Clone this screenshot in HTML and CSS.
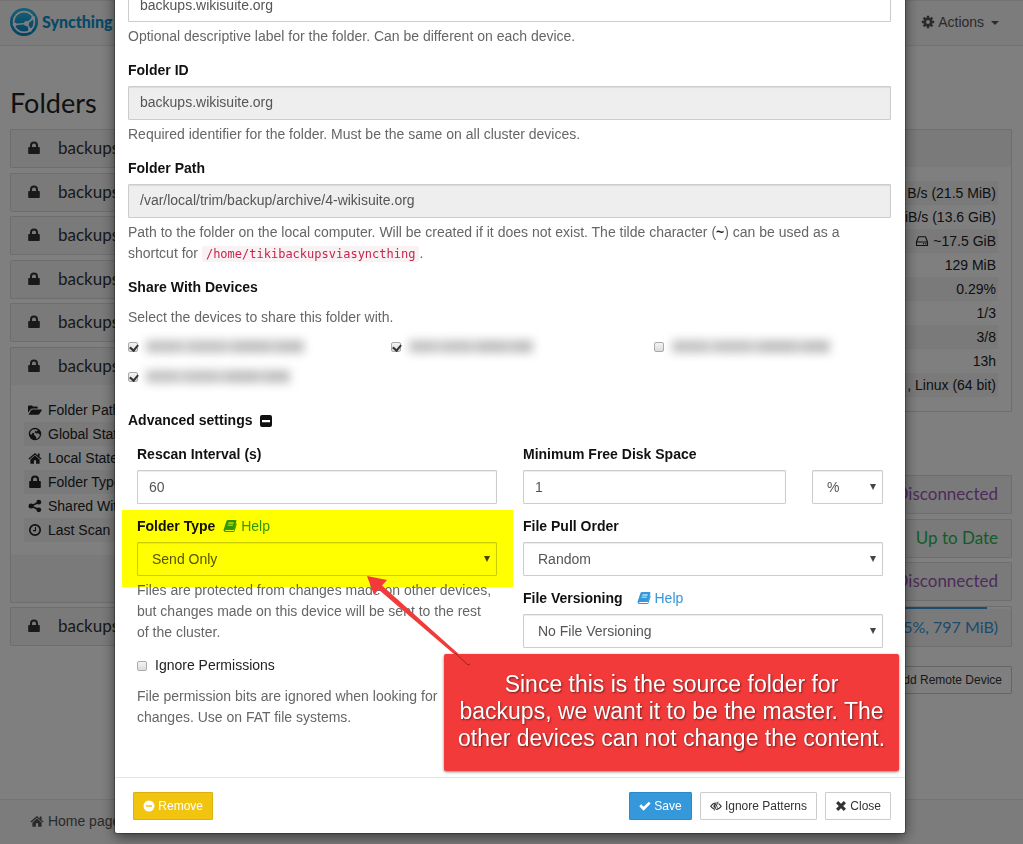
FILE: index.html
```html
<!DOCTYPE html>
<html lang="en">
<head>
<meta charset="utf-8">
<title>Syncthing</title>
<link rel="stylesheet" href="styles.css">
</head>
<body>
<svg class="sprite" aria-hidden="true">
  <symbol id="lock" viewBox="0 0 14 14"><path d="M2 6h1V4.500a4 4 0 0 1 8 0V6h1q.8 0 .8.8v5.400q0 .8-.8.8H2q-.8 0-.8-.8V6.800Q1.200 6 2 6zm3 0h4V4.500a2 2 0 0 0-4 0z"/></symbol>
  <symbol id="folder" viewBox="0 0 16 14"><path d="M0 10V3q0-1.200 1.200-1.200h3Q5.400 1.800 5.400 3H10q1.200 0 1.200 1.200V5.400H5.200Q3.800 5.400 2.800 6.500zM.6 12.300 3.600 7.300Q4.200 6.400 5.400 6.400h9.800q1 0 .5.900l-2.700 4.200q-.6.900-1.800.9H1q-.6 0-.4-.1z"/></symbol>
  <symbol id="globe" viewBox="0 0 14 14"><path fill-rule="evenodd" d="M7 .8a6.200 6.200 0 1 0 0 12.400A6.200 6.200 0 0 0 7 .8zM7.500 2.200 10 3 8.500 4.600 7.300 4 6.500 5.200 8 6.300l2.800.2 1.200 1.700-1.600 2.500-1.900 1.200-.8-2.600L6 8l.3-1.800L4.700 5.700 3.400 7.800 2.100 7A5 5 0 0 1 5 2.500z"/></symbol>
  <symbol id="home" viewBox="0 0 14 14"><path d="M7 2 .4 7.600l.8.900L7 3.700l5.800 4.800.8-.9-2-1.700V2.500h-1.800v1.900zM2.400 8.400V12.200q0 .5.500.5h3V9.300h2.200v3.400h3q.5 0 .5-.5V8.400L7 4.600z"/></symbol>
  <symbol id="share" viewBox="0 0 14 14"><path d="M3 7 11 3.200M3 7l8 3.800" stroke="currentColor" stroke-width="1.600"/><circle cx="3" cy="7" r="2.500"/><circle cx="10.800" cy="3.200" r="2.400"/><circle cx="10.800" cy="10.800" r="2.400"/></symbol>
  <symbol id="clock" viewBox="0 0 14 14"><circle cx="7" cy="7" r="5.200" fill="none" stroke="currentColor" stroke-width="1.700"/><path d="M7.500 4v3.600H5" fill="none" stroke="currentColor" stroke-width="1.100"/></symbol>
  <symbol id="cog" viewBox="0 0 14 14"><circle cx="7" cy="7" r="3.200" fill="none" stroke="currentColor" stroke-width="2.600"/><path d="M7 .8v2.500M7 10.700v2.500M.8 7h2.500M10.700 7h2.500M2.600 2.600l1.800 1.800M9.600 9.600l1.800 1.800M11.400 2.600 9.600 4.400M4.400 9.600l-1.800 1.800" stroke="currentColor" stroke-width="2.500"/></symbol>
  <symbol id="disk" viewBox="0 0 14 14"><path d="M1.500 8 3.500 2.700h7L12.500 8v3.500h-11zM1.500 8h11" fill="none" stroke="currentColor" stroke-width="1.100" stroke-linejoin="round"/><circle cx="8.500" cy="9.800" r=".7"/><circle cx="10.800" cy="9.800" r=".7"/></symbol>
  <symbol id="book" viewBox="0 0 14 14"><path fill-rule="evenodd" d="M5 1h7.500q1.200.1.900 1.300L11.300 10q-.3 1-1.300 1H3q-.9 0-.9.600 0 .5.800.5h7.300q.5 0 .7-.6L13 4.300q.9.400.6 1.200l-2 6.400Q11.200 13 10.100 13H2.700Q.6 13 .5 11.200q0-.6.300-1.300L3.500 2Q3.900 1 5 1zM5.500 3.500l-.3.9h5.300l.3-.9zM4.800 5.700l-.3.900h5.300l.3-.9z"/></symbol>
  <symbol id="minus-square" viewBox="0 0 14 14"><path fill-rule="evenodd" d="M3 1h8q2 0 2 2v8q0 2-2 2H3q-2 0-2-2V3q0-2 2-2zm0 5v2.300h8V6z"/></symbol>
  <symbol id="minus-circle" viewBox="0 0 14 14"><path fill-rule="evenodd" d="M7 .6a6.400 6.400 0 1 1 0 12.800A6.400 6.400 0 0 1 7 .6zM3.500 6v2h7V6z"/></symbol>
  <symbol id="check" viewBox="0 0 14 14"><path d="M.3 7.300 2.500 5.100 5.400 7.900 11.400 1.900l2.200 2.200L5.400 12.400z"/></symbol>
  <symbol id="eye" viewBox="0 0 16 14"><path d="M1 7.300Q4 3 8 3t7 4.300Q12 11.500 8 11.500T1 7.300z" fill="none" stroke="currentColor" stroke-width="1.500"/><path d="M4.500 6.500Q5 4 8.500 3.700L6.300 10.500Q4.500 9 4.500 6.500z"/><path d="M10.800 2 6.200 12.800" stroke="#fff" stroke-width="2.600"/><path d="M10.800 1.200 5.800 13" stroke="currentColor" stroke-width="1.300"/><path d="M11 6 9 10.200Q11.300 9 11 6z"/></symbol>
  <symbol id="times" viewBox="0 0 14 14"><path d="M2.500 2.500l9 9M11.500 2.500l-9 9" stroke="currentColor" stroke-width="3.600"/></symbol>
</svg>

<div class="page">
  <header class="navbar">
    <a class="brand" href="#">
      <svg class="logo" viewBox="0 0 28 28" aria-hidden="true">
        <defs><linearGradient id="blue" x2="0" y2="1"><stop stop-color="#2cc3ee"/><stop offset="1" stop-color="#0882c8"/></linearGradient></defs>
        <circle cx="14" cy="14" r="14" fill="url(#blue)"/>
        <g fill="none" stroke="#fff" stroke-width="1.600"><circle cx="14" cy="14" r="10.400"/><path d="M16.500 15.500 23.500 10M16.500 15.500 4.500 16.500M16.500 15.500 20.500 22"/></g>
        <g fill="#fff"><circle cx="16.500" cy="15.500" r="2.500"/><circle cx="23.300" cy="10" r="2"/><circle cx="4.700" cy="16.500" r="2"/><circle cx="20" cy="21.800" r="2"/></g>
      </svg>
      <span>Syncthing</span>
    </a>
    <button class="actions" type="button"><svg class="icon"><use href="#cog"/></svg> Actions <span class="caret"></span></button>
  </header>

  <main class="columns">
    <section>
      <h1>Folders</h1>
      <div class="panels">
        <div class="panel"><div class="heading"><svg class="icon"><use href="#lock"/></svg>backups</div></div>
        <div class="panel"><div class="heading"><svg class="icon"><use href="#lock"/></svg>backups</div></div>
        <div class="panel"><div class="heading"><svg class="icon"><use href="#lock"/></svg>backups</div></div>
        <div class="panel"><div class="heading"><svg class="icon"><use href="#lock"/></svg>backups</div></div>
        <div class="panel"><div class="heading"><svg class="icon"><use href="#lock"/></svg>backups</div></div>
        <div class="panel">
          <div class="heading"><svg class="icon"><use href="#lock"/></svg>backups</div>
          <ul class="rows facts">
            <li><svg class="icon"><use href="#folder"/></svg>Folder Path</li>
            <li><svg class="icon"><use href="#globe"/></svg>Global State</li>
            <li><svg class="icon"><use href="#home"/></svg>Local State</li>
            <li><svg class="icon"><use href="#lock"/></svg>Folder Type</li>
            <li><svg class="icon"><use href="#share"/></svg>Shared With</li>
            <li><svg class="icon"><use href="#clock"/></svg>Last Scan</li>
          </ul>
          <div class="panel-footer"></div>
        </div>
        <div class="panel"><div class="heading"><svg class="icon"><use href="#lock"/></svg>backups</div></div>
      </div>
    </section>
    <section class="devices">
      <div class="panel">
        <div class="heading"></div>
        <ul class="rows stats">
          <li>B/s (21.5 MiB)</li>
          <li>MiB/s (13.6 GiB)</li>
          <li><svg class="icon"><use href="#disk"/></svg> ~17.5 GiB</li>
          <li>129 MiB</li>
          <li>0.29%</li>
          <li>1/3</li>
          <li>3/8</li>
          <li>13h</li>
          <li>, Linux (64 bit)</li>
        </ul>
      </div>
      <div class="panels remote">
        <div class="panel"><div class="heading offline">Disconnected</div></div>
        <div class="panel"><div class="heading synced">Up to Date</div></div>
        <div class="panel"><div class="heading offline">Disconnected</div></div>
        <div class="panel"><div class="progress"></div><div class="heading syncing">(95%, 797 MiB)</div></div>
      </div>
      <button class="btn" type="button">Add Remote Device</button>
    </section>
  </main>

  <footer class="page-footer"><a href="#"><svg class="icon"><use href="#home"/></svg> Home page</a></footer>
</div>

<div class="backdrop">
  <div class="dialog" role="dialog" aria-label="Edit Folder">
    <form class="dialog-body">
      <div class="group">
        <input class="field" type="text" value="backups.wikisuite.org" aria-label="Folder Label">
        <p class="help">Optional descriptive label for the folder. Can be different on each device.</p>
      </div>
      <div class="group">
        <label class="title" for="folder-id">Folder ID</label>
        <input class="field" id="folder-id" type="text" value="backups.wikisuite.org" readonly>
        <p class="help">Required identifier for the folder. Must be the same on all cluster devices.</p>
      </div>
      <div class="group">
        <label class="title" for="folder-path">Folder Path</label>
        <input class="field" id="folder-path" type="text" value="/var/local/trim/backup/archive/4-wikisuite.org" readonly>
        <p class="help">Path to the folder on the local computer. Will be created if it does not exist. The tilde character (<strong>~</strong>) can be used as a shortcut for <code>/home/tikibackupsviasyncthing</code>.</p>
      </div>
      <fieldset class="group share">
        <legend class="title">Share With Devices</legend>
        <p class="help">Select the devices to share this folder with.</p>
        <div class="device-grid">
          <label class="check"><input type="checkbox" checked aria-label="Device 1"><span class="redacted wide"></span></label>
          <label class="check"><input type="checkbox" checked aria-label="Device 2"><span class="redacted short"></span></label>
          <label class="check"><input type="checkbox" aria-label="Device 3"><span class="redacted wide"></span></label>
          <label class="check"><input type="checkbox" checked aria-label="Device 4"><span class="redacted"></span></label>
        </div>
      </fieldset>
      <div class="title advanced">Advanced settings <svg class="icon"><use href="#minus-square"/></svg></div>
      <div class="settings">
        <div class="column">
          <div class="setting">
            <label class="title" for="rescan">Rescan Interval (s)</label>
            <input class="field" id="rescan" type="text" value="60">
          </div>
          <div class="setting">
            <div class="marked">
              <div class="title-row"><label class="title" for="folder-type">Folder Type</label><a class="help-link" href="#"><svg class="icon"><use href="#book"/></svg> Help</a></div>
              <div class="select"><select class="field" id="folder-type"><option>Send Only</option></select></div>
            </div>
            <p class="help">Files are protected from changes made on other devices, but changes made on this device will be sent to the rest of the cluster.</p>
          </div>
          <div class="setting">
            <label class="check"><input type="checkbox"> Ignore Permissions</label>
            <p class="help spaced">File permission bits are ignored when looking for changes. Use on FAT file systems.</p>
          </div>
        </div>
        <div class="column">
          <div class="setting">
            <label class="title" for="min-free">Minimum Free Disk Space</label>
            <div class="amount">
              <input class="field" id="min-free" type="text" value="1">
              <div class="select"><select class="field" aria-label="Unit"><option>%</option></select></div>
            </div>
          </div>
          <div class="setting">
            <label class="title" for="pull-order">File Pull Order</label>
            <div class="select"><select class="field" id="pull-order"><option>Random</option></select></div>
          </div>
          <div class="setting">
            <div class="title-row wide-gap"><label class="title" for="versioning">File Versioning</label><a class="help-link" href="#"><svg class="icon"><use href="#book"/></svg> Help</a></div>
            <div class="select"><select class="field" id="versioning"><option>No File Versioning</option></select></div>
          </div>
        </div>
      </div>
    </form>
    <div class="dialog-footer">
      <button class="btn warning" type="button"><svg class="icon"><use href="#minus-circle"/></svg> Remove</button>
      <button class="btn primary" type="button"><svg class="icon"><use href="#check"/></svg> Save</button>
      <button class="btn" type="button"><svg class="icon"><use href="#eye"/></svg> Ignore Patterns</button>
      <button class="btn" type="button"><svg class="icon"><use href="#times"/></svg> Close</button>
    </div>
    <div class="callout">
      Since this is the source folder for<br>backups, we want it to be the master. The<br>other devices can not change the content.
      <svg class="arrow" viewBox="0 0 104 92" aria-hidden="true"><path d="M0 0 20 4 15 9.500 104 89 101 90 11.500 13.500 7 19z" fill="#f23a3a"/><path d="M88 77 101 89 103 88" fill="none" stroke="#9c2424"/></svg>
    </div>
  </div>
</div>
</body>
</html>
```
FILE: styles.css
```css
* { box-sizing: border-box; }
body {
  margin: 0;
  background: #fff;
  color: #222;
  font: 14px/20px "Liberation Sans", Arial, sans-serif;
}
button, input, select { font: inherit; color: inherit; }
ul { list-style: none; margin: 0; padding: 0; }
p { margin: 0; }
.sprite { position: absolute; width: 0; height: 0; }
.icon { width: 14px; height: 14px; fill: currentColor; vertical-align: -2px; }

/* Main page */
.page { display: flex; flex-direction: column; height: 100vh; overflow: hidden; }
.navbar {
  display: flex;
  align-items: center;
  justify-content: space-between;
  height: 46px;
  padding: 0 24px 2px 10px;
  background: #f8f8f8;
  border: solid #e7e7e7;
  border-width: 1px 0;
}
.brand {
  display: flex;
  align-items: center;
  gap: 4px;
  color: #0a90d0;
  font: 900 16px/20px Lato, sans-serif;
  text-decoration: none;
}
.logo { width: 28px; height: 28px; }
.actions { background: none; border: 0; padding: 0; color: #555; }
.caret {
  display: inline-block;
  margin-left: 3px;
  border: 4px solid transparent;
  border-top-color: currentColor;
  border-bottom: 0;
  vertical-align: 2px;
}
.columns {
  flex: 1;
  display: grid;
  grid-template-columns: 1fr 1fr;
  gap: 30px;
  padding: 0 11px 0 10px;
}
h1 { margin: 40px 0 9px; font: 400 27px/34px Lato, sans-serif; }
.panels { display: flex; flex-direction: column; gap: 4px; }
.panel { background: #fff; border: 1px solid #ddd; border-radius: 1px; }
.panels .panel:nth-child(even) { margin-top: 1px; }
.heading {
  height: 37px;
  padding: 0 16px;
  background: #f5f5f5;
  color: #333;
  font: 17px/35px Lato, sans-serif;
}
.heading .icon { margin-right: 17px; vertical-align: -1px; }
.rows { padding: 13px; }
.rows li { height: 24px; line-height: 24px; }
.rows li:nth-child(even) { background: #f5f5f5; }
.rows.stats { padding: 14px 13px; }
.stats li:nth-child(even) { background: none; }
.stats li:nth-child(odd) { background: #f5f5f5; }
.facts li { padding-left: 4px; }
.facts .icon { margin-right: 6px; }
.panel-footer { height: 47px; background: #f5f5f5; }
.devices { display: flex; flex-direction: column; align-items: stretch; padding-top: 83px; text-align: right; }
.stats li { padding-right: 2px; }
.remote { margin: 63px 0 19px; }
.remote .heading { padding: 0 13px; }
.devices .btn { align-self: flex-end; }
.heading.offline { color: #9b59b6; }
.heading.synced { color: #29b74e; }
.heading.syncing { color: #3498db; font-size: 16px; }
.progress { width: 95%; height: 2px; background: #3498db; }
.page-footer {
  height: 45px;
  padding: 11px 30px;
  background: #f8f8f8;
  border-top: 1px solid #e7e7e7;
}
.page-footer a { color: #555; text-decoration: none; }

/* Dialog */
.backdrop {
  position: fixed;
  inset: 0;
  display: flex;
  align-items: flex-end;
  padding: 0 118px 11px 115px;
  background: rgba(0, 0, 0, .5);
  overflow: hidden;
}
.dialog {
  position: relative;
  flex: 1;
  background: #fff;
  border-radius: 2px;
  box-shadow: 0 4px 14px rgba(0, 0, 0, .55), 0 0 1px 1px rgba(0, 0, 0, .3);
}
.dialog-body { padding: 13px 14px 49px 13px; }
.group { margin: 0 0 13px; padding: 0; border: 0; }
.title { display: block; margin: 0 0 5px; padding: 0; font-weight: bold; line-height: 21px; color: #111; }
.field {
  display: block;
  width: 100%;
  height: 34px;
  padding: 6px 11px;
  background: #fff;
  border: 1px solid #ccc;
  border-radius: 1px;
  box-shadow: inset 0 1px 1px rgba(0, 0, 0, .08);
  color: #555;
}
.field[readonly] { padding: 5px 11px 7px; background: #eee; }
.help { margin-top: 4px; line-height: 21px; color: #666; }
.help strong { color: #222; }
code {
  padding: 1px 4px;
  background: #f9f2f4;
  border-radius: 2px;
  color: #c7254e;
  font: 12px "DejaVu Sans Mono", monospace;
}
.share { margin-bottom: 23px; }
.share .title { margin: 0; }
.share .help { margin-top: 9px; }
.device-grid { display: grid; grid-template-columns: repeat(3, 1fr); gap: 9px 26px; margin-top: 8px; }
.check { display: flex; align-items: center; gap: 8px; min-height: 21px; line-height: 21px; }
.check input {
  appearance: none;
  position: relative;
  width: 10px;
  height: 10px;
  margin: 0;
  background: linear-gradient(#f4f4f4, #dcdcdc);
  border: 1px solid #aaa;
  border-radius: 2px;
}
.check input:checked::after {
  content: "";
  position: absolute;
  left: 2px;
  top: 0;
  width: 4px;
  height: 6px;
  border: solid #333;
  border-width: 0 2px 2px 0;
  transform: rotate(40deg);
}
.redacted {
  width: 144px;
  height: 13px;
  background: linear-gradient(90deg, #c4c4c4 0 20%, #d6d6d6 24%, #c4c4c4 30% 48%, #d4d4d4 52%, #c0c0c0 58% 76%, #d0d0d0 80%, #c0c0c0 86%);
  filter: blur(5px);
}
.redacted.wide { width: 158px; }
.redacted.short { width: 124px; }
.advanced { display: flex; align-items: center; gap: 7px; margin: 0 0 13px; }
.settings { display: grid; grid-template-columns: 1fr 1fr; gap: 26px; padding: 0 8px 0 9px; }
.column { display: flex; flex-direction: column; gap: 12px; }
.column .help { padding-right: 4px; }
.title-row { display: flex; gap: 8px; line-height: 21px; }
.title-row.wide-gap { gap: 14px; }
.help-link { color: #3498db; text-decoration: none; }
.select { position: relative; }
.select select { appearance: none; padding: 0 14px; }
.select::after {
  content: "";
  position: absolute;
  right: 7px;
  top: 14px;
  border: 3px solid transparent;
  border-top: 6px solid #444;
  border-bottom: 0;
  pointer-events: none;
}
.amount { display: grid; grid-template-columns: 1fr 71px; gap: 26px; }
.marked { position: relative; }
.marked::after {
  content: "";
  position: absolute;
  inset: -6px -16px -11px -15px;
  background: #ff0;
  mix-blend-mode: multiply;
  pointer-events: none;
}
.help.spaced { margin-top: 10px; width: 310px; }
.dialog-footer {
  display: flex;
  gap: 8px;
  padding: 14px 14px 13px 18px;
  border-top: 1px solid #e5e5e5;
}
.btn {
  height: 28px;
  padding: 0 9px;
  background: #fff;
  border: 1px solid #ccc;
  border-radius: 1px;
  color: #333;
  font-size: 12px;
  line-height: 20px;
  white-space: nowrap;
}
.btn .icon { width: 12px; height: 12px; }
.warning { margin-right: auto; background: #f1c40f; border-color: #dbb20d; color: #fff; }
.primary { background: #3498db; border-color: #2a8bcc; color: #fff; }

/* Annotation */
.callout {
  position: absolute;
  right: 6px;
  bottom: 62px;
  width: 455px;
  padding: 17px 10px 19px;
  background: #f23a3a;
  border-radius: 2px;
  box-shadow: 0 1px 3px rgba(0, 0, 0, .5);
  color: #fff;
  font-size: 23px;
  line-height: 27px;
  text-align: center;
  text-shadow: 1px 1px 2px rgba(0, 0, 0, .5);
}
.arrow { position: absolute; left: -77px; top: -78px; width: 104px; height: 92px; }
```
